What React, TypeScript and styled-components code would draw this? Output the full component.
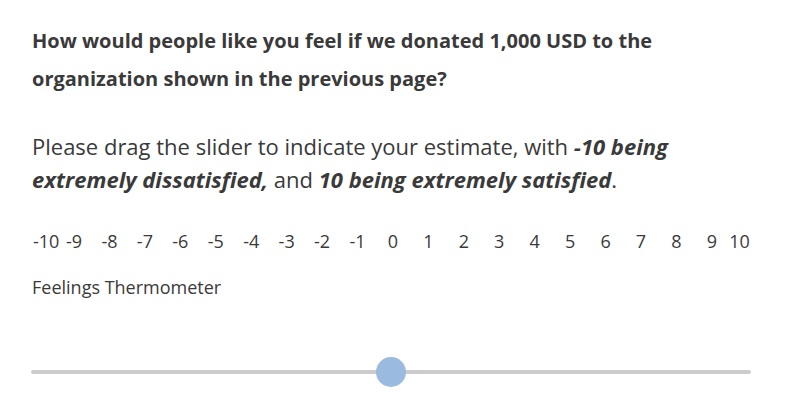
import React from 'react';
import styled, { createGlobalStyle } from 'styled-components';

const GlobalStyle = createGlobalStyle`
  body {
    margin: 0;
    background: #ffffff;
    font-family: 'Open Sans', 'Noto Sans', sans-serif;
    color: #3a3a3a;
  }
`;

const Page = styled.div`
  width: 804px;
  height: 412px;
  box-sizing: border-box;
  padding: 22px 32px 0 31px;
  overflow: hidden;
`;

const Question = styled.h2`
  margin: 0 0 32px 1px;
  font-size: 20px;
  font-weight: 700;
  line-height: 38px;
  color: #3a3a3a;
`;

const Instructions = styled.p`
  margin: 0 0 33px 1px;
  font-size: 22px;
  line-height: 33px;
  color: #3a3a3a;
`;

const Strong = styled.strong`
  font-weight: 700;
  font-style: italic;
`;

const Scale = styled.div`
  width: 720px;
  display: flex;
  padding-left: 2px;
  box-sizing: border-box;
  font-size: 18px;
  line-height: 24px;
  color: #3a3a3a;
`;

const Tick = styled.span<{ $pos: 'first' | 'mid' | 'last' }>`
  flex: 0 0 ${(p) => (p.$pos === 'first' ? '23.3px' : p.$pos === 'last' ? '20.3px' : '35.44px')};
  min-width: 0;
  text-align: ${(p) => (p.$pos === 'first' ? 'left' : p.$pos === 'last' ? 'right' : 'center')};
  white-space: nowrap;
  direction: ${(p) => (p.$pos === 'last' ? 'rtl' : 'ltr')};
`;

const SliderLabel = styled.div`
  margin: 22px 0 0 1px;
  font-size: 18px;
  line-height: 24px;
  color: #3a3a3a;
`;

const Track = styled.div`
  position: relative;
  width: 720px;
  height: 4px;
  margin-top: 71px;
  border-radius: 2px;
  background: #cccccc;
`;

const Thumb = styled.div`
  position: absolute;
  top: 50%;
  width: 30px;
  height: 30px;
  border-radius: 50%;
  background: #9abbdf;
  transform: translate(-50%, -50%);
`;

const ticks = Array.from({ length: 21 }, (_, i) => i - 10);

const App: React.FC = () => {
  const value = 0;
  const pct = ((value + 10) / 20) * 100;

  return (
    <>
      <GlobalStyle />
      <Page>
        <Question>
          How would people like you feel if we donated 1,000 USD to the organization shown in the previous page?
        </Question>
        <Instructions>
          Please drag the slider to indicate your estimate, with <Strong>-10 being extremely dissatisfied,</Strong> and{' '}
          <Strong>10 being extremely satisfied</Strong>.
        </Instructions>
        <Scale>
          {ticks.map((t, i) => (
            <Tick key={t} $pos={i === 0 ? 'first' : i === ticks.length - 1 ? 'last' : 'mid'}>
              {t}
            </Tick>
          ))}
        </Scale>
        <SliderLabel>Feelings Thermometer</SliderLabel>
        <Track>
          <Thumb style={{ left: `${pct}%` }} />
        </Track>
      </Page>
    </>
  );
};

export default App;
